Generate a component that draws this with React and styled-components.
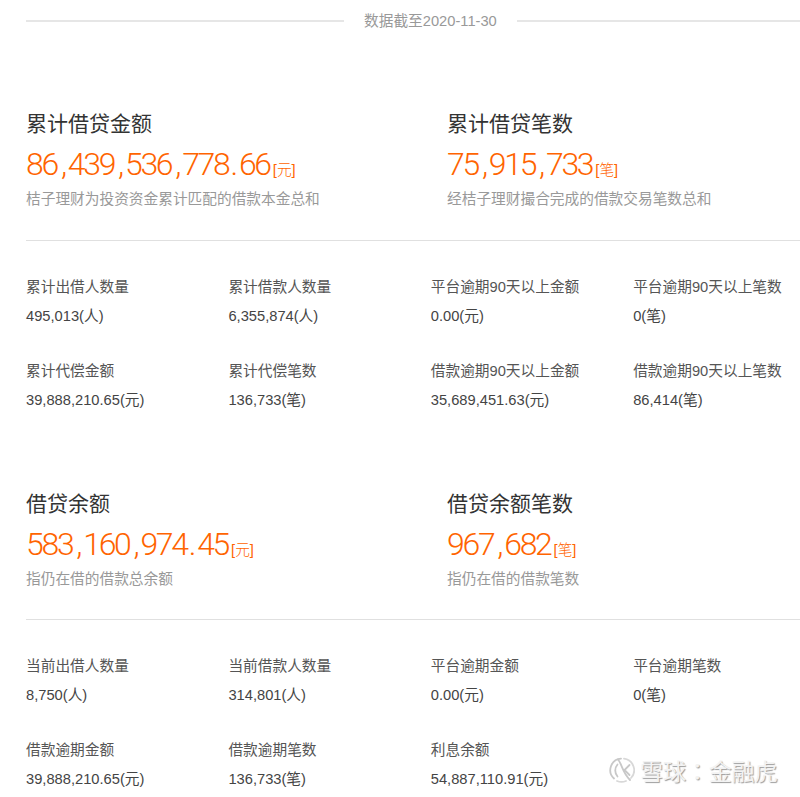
import React from "react";
import styled, { createGlobalStyle } from "styled-components";

const GlobalStyle = createGlobalStyle`
  html, body {
    margin: 0;
    padding: 0;
    background: #fff;
    font-family: "Liberation Sans", "Noto Sans CJK SC", sans-serif;
  }
`;

const Page = styled.div`
  position: relative;
  width: 800px;
  height: 797px;
  overflow: hidden;
  padding-left: 26px;
  box-sizing: border-box;
`;

const DateBar = styled.div`
  display: flex;
  align-items: center;
  height: 40px;
  margin-bottom: 68px;
  color: #999;
  font-size: 14.7px;
  gap: 20px;

  &::before,
  &::after {
    content: "";
    height: 2px;
    margin-top: 2px;
    background: #e6e6e6;
  }
  &::before {
    width: 318px;
  }
  &::after {
    flex: 1;
  }
`;

const DateText = styled.span`
  margin-bottom: 2px;
`;

const Summary = styled.div`
  display: grid;
  grid-template-columns: 421px 1fr;
  height: ${(props) => props.$height}px;
  border-bottom: 1px solid #e0e0e0;
`;

const SummaryItem = styled.div`
  display: flex;
  flex-direction: column;
`;

const SummaryTitle = styled.div`
  height: 30px;
  margin-top: 1px;
  line-height: 30px;
  font-size: 21px;
  color: #333;
`;

const BigValue = styled.div`
  display: flex;
  align-items: baseline;
  height: 46px;
  line-height: 46px;
  margin-top: 2px;
  color: #ff6400;
  font-family: Roboto, "Liberation Sans", sans-serif;
  font-weight: 300;
  font-size: 32px;
  letter-spacing: -2.3px;
`;

const Separator = styled.span`
  margin: 0 3px 0 ${(props) => props.$left}px;
`;

const Unit = styled.span`
  margin-left: 3px;
  font-family: "Liberation Sans", "Noto Sans CJK SC", sans-serif;
  font-size: 14.7px;
  letter-spacing: 0;
`;

const SummaryNote = styled.div`
  line-height: 24px;
  font-size: 14.7px;
  color: #999;
`;

const StatGrid = styled.div`
  display: grid;
  grid-template-columns: repeat(4, 202.4px);
  grid-auto-rows: 84px;
  padding-top: 33px;
`;

const Stat = styled.div`
  font-size: 14.7px;
  color: #555;
`;

const StatLabel = styled.div`
  height: 26px;
  line-height: 26px;
`;

const StatValue = styled.div`
  height: 26px;
  line-height: 26px;
  margin-top: 3px;
  color: #444;
`;

const SecondBlock = styled.div`
  margin-top: 46px;
`;

const Watermark = styled.div`
  position: absolute;
  left: 609px;
  top: 755px;
  display: flex;
  align-items: center;
  gap: 5px;
  color: #f3f3f3;
  font-family: "Noto Sans CJK TC", sans-serif;
  font-size: 23px;
  line-height: 30px;
  letter-spacing: -0.1px;
  text-shadow: 1px 1px 1px #9a9a9a;
`;

const Logo = () => (
  <svg width="26" height="26" viewBox="0 0 26 26" fill="none" stroke="#c8c8c8" strokeWidth="1.8" strokeLinecap="round">
    <path d="M12 1.6A11.5 11.5 0 0 0 5 21.5" />
    <path d="M15 1.7A11.5 11.5 0 0 1 22 21" stroke="#d8d8d8" />
    <path d="M8 24A11.5 11.5 0 0 0 17 24" stroke="#d8d8d8" />
    <path d="M8.5 7.5C5.5 11 5.5 16 8.5 19.5" />
    <path d="M9 2.5C13 7 13 15 21 23" />
    <path d="M20.5 8L15.5 13L20.5 18" />
  </svg>
);

const firstStats = [
  ["累计出借人数量", "495,013(人)"],
  ["累计借款人数量", "6,355,874(人)"],
  ["平台逾期90天以上金额", "0.00(元)"],
  ["平台逾期90天以上笔数", "0(笔)"],
  ["累计代偿金额", "39,888,210.65(元)"],
  ["累计代偿笔数", "136,733(笔)"],
  ["借款逾期90天以上金额", "35,689,451.63(元)"],
  ["借款逾期90天以上笔数", "86,414(笔)"],
];

const secondStats = [
  ["当前出借人数量", "8,750(人)"],
  ["当前借款人数量", "314,801(人)"],
  ["平台逾期金额", "0.00(元)"],
  ["平台逾期笔数", "0(笔)"],
  ["借款逾期金额", "39,888,210.65(元)"],
  ["借款逾期笔数", "136,733(笔)"],
  ["利息余额", "54,887,110.91(元)"],
];

// commas and the dot sit wider apart than the narrow digits
const Amount = ({ value }) =>
  value.split(/([,.])/).map((part, i) =>
    part === "," || part === "." ? (
      <Separator key={i} $left={part === "," ? 4 : 2}>
        {part}
      </Separator>
    ) : (
      part
    )
  );

const SummaryBlock = ({ items, height }) => (
  <Summary $height={height}>
    {items.map((item) => (
      <SummaryItem key={item.title}>
        <SummaryTitle>{item.title}</SummaryTitle>
        <BigValue>
          <span>
            <Amount value={item.value} />
          </span>
          <Unit>[{item.unit}]</Unit>
        </BigValue>
        <SummaryNote>{item.note}</SummaryNote>
      </SummaryItem>
    ))}
  </Summary>
);

const Stats = ({ items }) => (
  <StatGrid>
    {items.map(([label, value]) => (
      <Stat key={label}>
        <StatLabel>{label}</StatLabel>
        <StatValue>{value}</StatValue>
      </Stat>
    ))}
  </StatGrid>
);

const App = () => (
  <Page>
    <GlobalStyle />
    <DateBar>
      <DateText>数据截至2020-11-30</DateText>
    </DateBar>

    <SummaryBlock
      height={132}
      items={[
        {
          title: "累计借贷金额",
          value: "86,439,536,778.66",
          unit: "元",
          note: "桔子理财为投资资金累计匹配的借款本金总和",
        },
        {
          title: "累计借贷笔数",
          value: "75,915,733",
          unit: "笔",
          note: "经桔子理财撮合完成的借款交易笔数总和",
        },
      ]}
    />
    <Stats items={firstStats} />

    <SecondBlock>
      <SummaryBlock
        height={131}
        items={[
          {
            title: "借贷余额",
            value: "583,160,974.45",
            unit: "元",
            note: "指仍在借的借款总余额",
          },
          {
            title: "借贷余额笔数",
            value: "967,682",
            unit: "笔",
            note: "指仍在借的借款笔数",
          },
        ]}
      />
      <Stats items={secondStats} />
    </SecondBlock>

    <Watermark>
      <Logo />
      <span>雪球：金融虎</span>
    </Watermark>
  </Page>
);

export default App;
